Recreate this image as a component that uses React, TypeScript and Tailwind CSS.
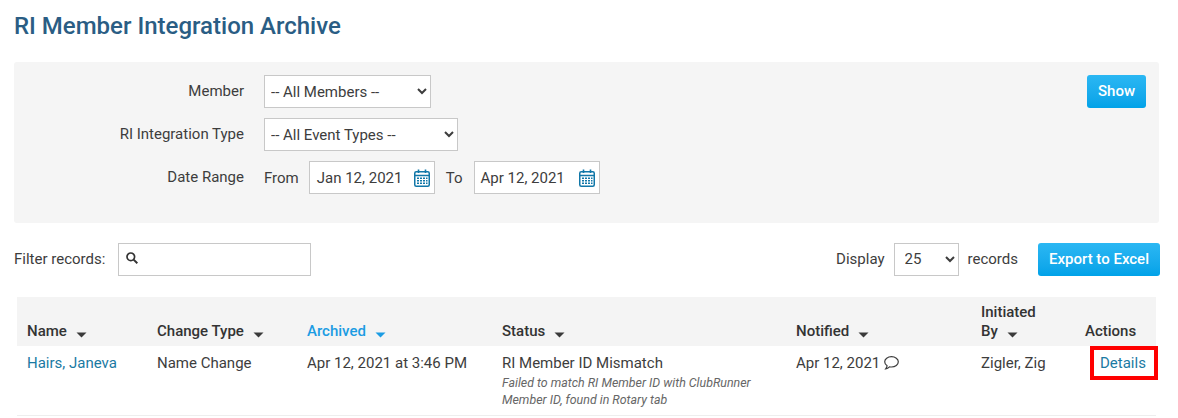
import React from "react";

const inputBorder = "border border-[#c8c8c8] bg-white";

function Caret({ blue }: { blue?: boolean }) {
  return (
    <svg width="11" height="6" viewBox="0 0 11 6" className="inline-block ml-[9px] mt-[5px]">
      <path d="M0.5 0.5h10L5.5 5.5z" fill={blue ? "#1b9ce3" : "#3a3a3a"} />
    </svg>
  );
}

function CalendarIcon() {
  return (
    <svg width="16" height="18" viewBox="0 0 16 18" fill="none" className="shrink-0 mt-[1px]">
      <rect x="0.75" y="2.75" width="14.5" height="14.5" rx="1.5" stroke="#1177a8" strokeWidth="1.5" />
      <path d="M1 6.5h14" stroke="#1177a8" strokeWidth="1.5" />
      <path d="M4.5 0.5v3.5M11.5 0.5v3.5" stroke="#1177a8" strokeWidth="1.6" />
      <path d="M3 8.5h2v1.5H3zM6 8.5h2v1.5H6zM9 8.5h2v1.5H9zM12 8.5h1.5v1.5H12zM3 11h2v1.5H3zM6 11h2v1.5H6zM9 11h2v1.5H9zM12 11h1.5v1.5H12zM3 13.5h2V15H3zM6 13.5h2V15H6zM9 13.5h2V15H9zM12 13.5h1.5V15H12z" fill="#1177a8" />
    </svg>
  );
}

function DateInput({ value, className }: { value: string; className: string }) {
  return (
    <div className={`${inputBorder} ${className} w-[126px] h-[33px] flex items-center justify-between pr-[4px]`}>
      <span className="mt-[1px]">{value}</span>
      <CalendarIcon />
    </div>
  );
}

function FilterRow({ label, children }: { label: string; children: React.ReactNode }) {
  return (
    <div className="flex items-center h-[33px]">
      <label className="w-[230px] text-right mr-[20px] -mt-[1px]">{label}</label>
      {children}
    </div>
  );
}

function Th({ children, className = "" }: { children: React.ReactNode; className?: string }) {
  return <th className={`pl-[10px] pb-[5px] pt-[4px] align-bottom text-left font-medium leading-[19px] ${className}`}>{children}</th>;
}

export default function App() {
  return (
    <div
      className="w-[1178px] h-[418px] overflow-hidden bg-white text-[15px] text-[#3d3d3d]"
      style={{ fontFamily: "Roboto, sans-serif" }}
    >
      <h1 className="pl-[14px] pt-[12px] h-[62px] text-[24px] leading-[28px] font-medium text-[#2a5d84]">
        RI Member Integration Archive
      </h1>

      <div className="ml-[14px] w-[1145px] h-[161px] bg-[#f5f5f5] rounded-[3px] pt-[13px] pr-[13px] flex justify-between">
        <div className="flex flex-col gap-[10px]">
          <FilterRow label="Member">
            <select className={`${inputBorder} w-[167px] h-[33px] pl-[2px] outline-none`}>
              <option>-- All Members --</option>
            </select>
          </FilterRow>
          <FilterRow label="RI Integration Type">
            <select className={`${inputBorder} w-[194px] h-[33px] pl-[2px] outline-none`}>
              <option>-- All Event Types --</option>
            </select>
          </FilterRow>
          <FilterRow label="Date Range">
            <span className="mr-[10px] mt-[2px]">From</span>
            <DateInput value="Jan 12, 2021" className="pl-[7px]" />
            <span className="mx-[11px] mt-[1px]">To</span>
            <DateInput value="Apr 12, 2021" className="pl-[6px]" />
          </FilterRow>
        </div>
        <button className="w-[59px] h-[33px] rounded-[3px] bg-gradient-to-b from-[#2ab7f3] to-[#00a2e8] text-white font-medium">
          Show
        </button>
      </div>

      <div className="flex items-center justify-between ml-[14px] w-[1146px] mt-[20px] h-[32px]">
        <div className="flex items-center">
          <span className="mr-[13px]">Filter records:</span>
          <div className={`${inputBorder} w-[193px] h-[33px] flex items-center pl-[7px]`}>
            <svg width="12" height="12" viewBox="0 0 12 12" fill="none" className="-mt-[2px]">
              <circle cx="4.8" cy="4.8" r="3.8" stroke="#333" strokeWidth="1.7" />
              <path d="M7.6 7.6l3.7 3.7" stroke="#333" strokeWidth="2" />
            </svg>
          </div>
        </div>
        <div className="flex items-center">
          <span className="mr-[9px]">Display</span>
          <select className={`${inputBorder} w-[65px] h-[33px] pl-[6px] outline-none`}>
            <option>25</option>
          </select>
          <span className="ml-[9px] mr-[20px]">records</span>
          <button className="w-[122px] h-[33px] rounded-[3px] bg-gradient-to-b from-[#2ab7f3] to-[#00a2e8] text-white font-medium">
            Export to Excel
          </button>
        </div>
      </div>

      <table className="ml-[17px] mt-[22px] w-[1139px] table-fixed border-collapse">
        <colgroup>
          <col className="w-[130px]" />
          <col className="w-[150px]" />
          <col className="w-[195px]" />
          <col className="w-[294px]" />
          <col className="w-[185px]" />
          <col className="w-[104px]" />
          <col className="w-[81px]" />
        </colgroup>
        <thead>
          <tr className="bg-[#f4f4f4] h-[49px] text-[#333333]">
            <Th>Name<Caret /></Th>
            <Th>Change Type<Caret /></Th>
            <Th className="text-[#1b9ce3]">Archived<Caret blue /></Th>
            <Th>Status<Caret /></Th>
            <Th>Notified<Caret /></Th>
            <Th>Initiated<br />By<Caret /></Th>
            <Th>Actions</Th>
          </tr>
        </thead>
        <tbody>
          <tr className="h-[69px] border-b border-[#eeeeee] align-top">
            <td className="pl-[10px] pt-[7px] leading-[20px] text-[#1a7aa3]">Hairs, Janeva</td>
            <td className="pl-[10px] pt-[7px] leading-[20px]">Name Change</td>
            <td className="pl-[10px] pt-[7px] leading-[20px]">Apr 12, 2021 at 3:46 PM</td>
            <td className="pl-[10px] pt-[7px] leading-[20px]">
              RI Member ID Mismatch
              <div className="text-[12.4px] italic leading-[17px] text-[#666666] mt-[1px] w-[270px]">
                Failed to match RI Member ID with ClubRunner Member ID, found in Rotary tab
              </div>
            </td>
            <td className="pl-[10px] pt-[7px] leading-[20px]">
              <span className="inline-flex items-center gap-[4px]">
                Apr 12, 2021
                <svg width="15" height="14" viewBox="0 0 15 14" fill="none" className="-mt-[1px]">
                  <path d="M7.5 0.7C3.7 0.7 0.7 2.9 0.7 5.8c0 1.6.9 3 2.4 3.9-.1 1.1-.6 2.1-1.4 3.1 1.5-.2 2.8-1 3.8-2 .6.1 1.3.2 2 .2 3.8 0 6.8-2.3 6.8-5.2S11.3 0.7 7.5 0.7z" stroke="#3d3d3d" strokeWidth="1.2" />
                </svg>
              </span>
            </td>
            <td className="pl-[10px] pt-[7px] leading-[20px]">Zigler, Zig</td>
            <td className="relative pl-[10px] pt-[7px] leading-[20px]">
              <a className="ml-[15px] text-[#1a7aa3]">Details</a>
              <div className="absolute left-[15px] top-0 w-[68px] h-[34px] border-[4px] border-[#ff0000]" />
            </td>
          </tr>
        </tbody>
      </table>
    </div>
  );
}
